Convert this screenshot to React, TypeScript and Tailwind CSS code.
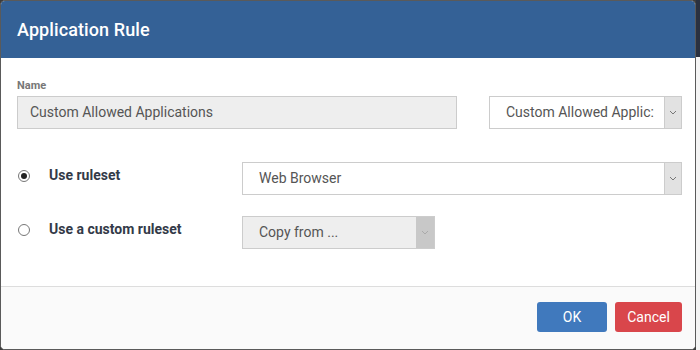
import React from "react";

function Chevron({ color }: { color: string }) {
  return (
    <svg width="8" height="5" viewBox="0 0 8 5" fill="none">
      <path d="M1 1 L4 4 L7 1" stroke={color} strokeWidth="1" />
    </svg>
  );
}

export default function App() {
  return (
    <div
      className="w-[700px] h-[350px] flex bg-[#3c3c3c] overflow-hidden"
      style={{ fontFamily: "Roboto, 'Liberation Sans', sans-serif" }}
    >
      <div className="w-[696px] h-[350px] border border-[#5a5a5a] rounded-[5px] bg-white flex flex-col overflow-hidden">
        <div className="h-[57px] bg-[#346196] flex items-center pl-[16px] shrink-0">
          <span className="text-white text-[18px] font-medium tracking-[0.1px]">Application Rule</span>
        </div>
        <div className="flex-1 flex flex-col pl-[16px] pr-[13px] pt-[21px]">
          <div className="text-[11px] font-bold text-[#777] leading-[14px]">Name</div>
          <div className="flex items-center justify-between mt-[3px]">
            <div className="w-[440px] h-[33px] bg-[#eeeeee] border border-[#cccccc] flex items-center pl-[12px] text-[14px] text-[#555]">
              Custom Allowed Applications
            </div>
            <div className="w-[193px] h-[33px] border border-[#cccccc] flex bg-white">
              <div className="flex-1 flex items-center pl-[16px] text-[14px] text-[#555] overflow-hidden whitespace-nowrap">
                Custom Allowed Applic:
              </div>
              <div className="w-[17px] bg-[#e2e2e2] border-l border-[#cccccc] flex items-center justify-center">
                <Chevron color="#777" />
              </div>
            </div>
          </div>

          <div className="flex items-start mt-[33px]">
            <div className="w-[225px] flex items-center pt-[4px] h-[23px]">
              <div className="w-[12px] h-[12px] rounded-full border border-[#777] flex items-center justify-center ml-[1px] bg-white">
                <div className="w-[6px] h-[6px] rounded-full bg-[#222]" />
              </div>
              <span className="ml-[19px] text-[14px] font-bold text-[#333a48]">Use ruleset</span>
            </div>
            <div className="w-[440px] h-[33px] border border-[#cccccc] flex bg-white">
              <div className="flex-1 flex items-center pl-[16px] text-[14px] text-[#555]">Web Browser</div>
              <div className="w-[17px] bg-[#e2e2e2] border-l border-[#cccccc] flex items-center justify-center">
                <Chevron color="#777" />
              </div>
            </div>
          </div>

          <div className="flex items-start mt-[21px]">
            <div className="w-[225px] flex items-center pt-[4px] h-[23px]">
              <div className="w-[12px] h-[12px] rounded-full border border-[#777] ml-[1px] bg-white" />
              <span className="ml-[19px] text-[14px] font-bold text-[#333a48]">Use a custom ruleset</span>
            </div>
            <div className="w-[193px] h-[33px] border border-[#cccccc] flex bg-[#eeeeee]">
              <div className="flex-1 flex items-center pl-[16px] text-[14px] text-[#555]">Copy from ...</div>
              <div className="w-[18px] bg-[#c8c8c8] flex items-center justify-center">
                <Chevron color="#aaa" />
              </div>
            </div>
          </div>
        </div>
        <div className="h-[63px] shrink-0 border-t border-[#dddddd] bg-[#fafafa] flex items-center justify-end pr-[13px] gap-[8px] pb-[2px]">
          <button className="w-[70px] h-[30px] rounded-[3px] bg-[#4079bd] text-white text-[14px]">OK</button>
          <button className="w-[67px] h-[30px] rounded-[3px] bg-[#d9464b] text-white text-[14px]">Cancel</button>
        </div>
      </div>
      <div className="flex-1 flex flex-col">
        <div className="h-[57px] bg-[#2a3140]" />
        <div className="flex-1 bg-[#f4f4f4]" />
      </div>
    </div>
  );
}
